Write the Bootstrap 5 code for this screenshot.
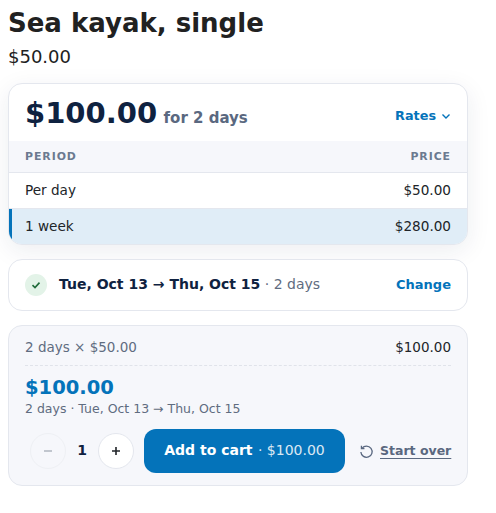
<!DOCTYPE html>
<html lang="en"><head><meta charset="utf-8">
<link href="https://cdn.jsdelivr.net/npm/bootstrap@5.3.0/dist/css/bootstrap.min.css" rel="stylesheet">
<style>
body{font-family:"DejaVu Sans",sans-serif;background:#fff;color:#212529;font-size:14px}
.wrap{width:460px;margin-left:8px}
h1.ttl{font-size:26px;font-weight:700;margin:7px 0 0;line-height:32px;color:#212121}
.sub{font-size:18px;line-height:24px;margin:6px 0 14px;color:#212121}
.box{border:1px solid #e4e7ee;border-radius:14px;background:#fff}
.rates{overflow:hidden;box-shadow:0 6px 24px rgba(20,40,80,.08);margin-bottom:14px}
.hdr{height:57px;padding:0 16px}
.big{font-size:29px;font-weight:700;color:#0f2240;line-height:38px;margin-right:2px}
.for{font-size:15px;font-weight:700;color:#5a6880}
.lnk{color:#0473ba;font-weight:700;font-size:12.8px;text-decoration:none}
.rlk{margin-top:7px}
.chg{font-size:13px}
.chev{width:10px;height:10px;margin-left:5px;vertical-align:-1px}
.thd{background:#f6f7fb;font-size:10.9px;font-weight:700;letter-spacing:.95px;color:#6b7a90;height:32px;padding:1px 16px 0;border-bottom:1px solid #e4e7ee}
.rw{height:36px;padding:0 16px;font-size:13.6px;border-bottom:1px solid #e4e7ee}
.sel{height:35px;background:#e0edf7;border-left:3px solid #0473ba;padding-left:13px;border-bottom:0}
.when{height:52px;padding:0 16px;margin-bottom:14px}
.tick{width:22px;height:22px;border-radius:50%;background:#e3f3e8;flex:none}
.tick svg{width:12px;height:12px}
.wtx{color:#0f2240;margin-left:4px;line-height:19px;padding-bottom:2px}
.wmu{color:#5f6c80;font-size:14px}
.sum{background:#f6f7fb;padding:11px 16px 12px;height:161px}
.mut{color:#5f6c80;font-size:13.5px;line-height:21px}
.amt{color:#212529}
.dash{border-bottom:1px dashed #e0e3ea;padding-bottom:7px}
.tot{font-size:19.5px;font-weight:700;color:#0473ba;line-height:24px;margin-top:10px}
.det{color:#5f6c80;font-size:12.5px;line-height:18px}
.ctl{margin-top:11px}
.stp{width:36px;height:36px;border-radius:50%;border:1px solid #e4e7ee;background:#fff;padding:0;flex:none;color:#212529}
.stp svg{width:10px;height:10px;display:block;margin:auto}
.off{background:#f6f7fb;color:#b4bac4;border-color:#eef0f4}
.stq{width:32px;text-align:center;font-weight:700;color:#0f2240;flex:none;padding-bottom:2px}
.add{background:#0473ba;color:#fff;border:0;border-radius:12px;height:44px;width:201px;font-size:14px;padding:0 0 2px;margin-left:10px;flex:none}
.add:hover{background:#0473ba;color:#fff}
.add b{font-weight:700}
.add span{opacity:.85;margin-left:1px}
.so{color:#5a6880;font-weight:700;font-size:12.5px;text-decoration:underline;text-underline-offset:3px;margin-left:6px;white-space:nowrap}
.rst{width:15px;height:15px;margin-left:14px;flex:none}
.lead-step{margin-left:5px}
</style></head><body>
<div class="wrap">
<h1 class="ttl">Sea kayak, single</h1>
<p class="sub">$50.00</p>
<div class="box rates">
<div class="hdr d-flex justify-content-between align-items-center"><div><span class="big">$100.00</span> <span class="for">for 2 days</span></div><a class="lnk rlk" href="#">Rates<svg class="chev" viewBox="0 0 10 10" fill="none" stroke="currentColor" stroke-width="1.4"><path d="M1.5 3.5 5 7l3.5-3.5"/></svg></a></div>
<div class="thd d-flex justify-content-between align-items-center"><span>PERIOD</span><span>PRICE</span></div>
<div class="rw d-flex justify-content-between align-items-center"><span>Per day</span><span>$50.00</span></div>
<div class="rw sel d-flex justify-content-between align-items-center"><span>1 week</span><span>$280.00</span></div>
</div>
<div class="box when d-flex align-items-center gap-2"><span class="tick d-flex align-items-center justify-content-center"><svg viewBox="0 0 12 12" fill="none" stroke="#1f6b3a" stroke-width="1.6"><path d="M2.5 6.2 5 8.6l4.5-5"/></svg></span><span class="flex-grow-1 wtx"><b>Tue, Oct 13 → Thu, Oct 15</b> <span class="wmu">· 2 days</span></span><a class="lnk chg" href="#">Change</a></div>
<div class="box sum">
<div class="d-flex justify-content-between mut dash"><span>2 days × $50.00</span><span class="amt">$100.00</span></div>
<div class="tot">$100.00</div>
<div class="det">2 days · Tue, Oct 13 → Thu, Oct 15</div>
<div class="d-flex align-items-center ctl"><button class="stp off lead-step" aria-label="Decrease"><svg viewBox="0 0 10 10" fill="none" stroke="currentColor" stroke-width="1.6"><path d="M1 5h8"/></svg></button><span class="stq">1</span><button class="stp" aria-label="Increase"><svg viewBox="0 0 10 10" fill="none" stroke="currentColor" stroke-width="1.6"><path d="M1 5h8M5 1v8"/></svg></button><button class="btn add"><b>Add to cart</b> <span>· $100.00</span></button><svg class="rst" viewBox="0 0 16 16" fill="none" stroke="#5a6880" stroke-width="1.4"><path d="M3.2 4.6A6 6 0 1 1 2 8.6"/><path d="M2.6 1.8v3.2h3.2"/></svg><span class="so">Start over</span></div>
</div>
</div>
<script src="https://cdn.jsdelivr.net/npm/bootstrap@5.3.0/dist/js/bootstrap.bundle.min.js"></script>
</body></html>
